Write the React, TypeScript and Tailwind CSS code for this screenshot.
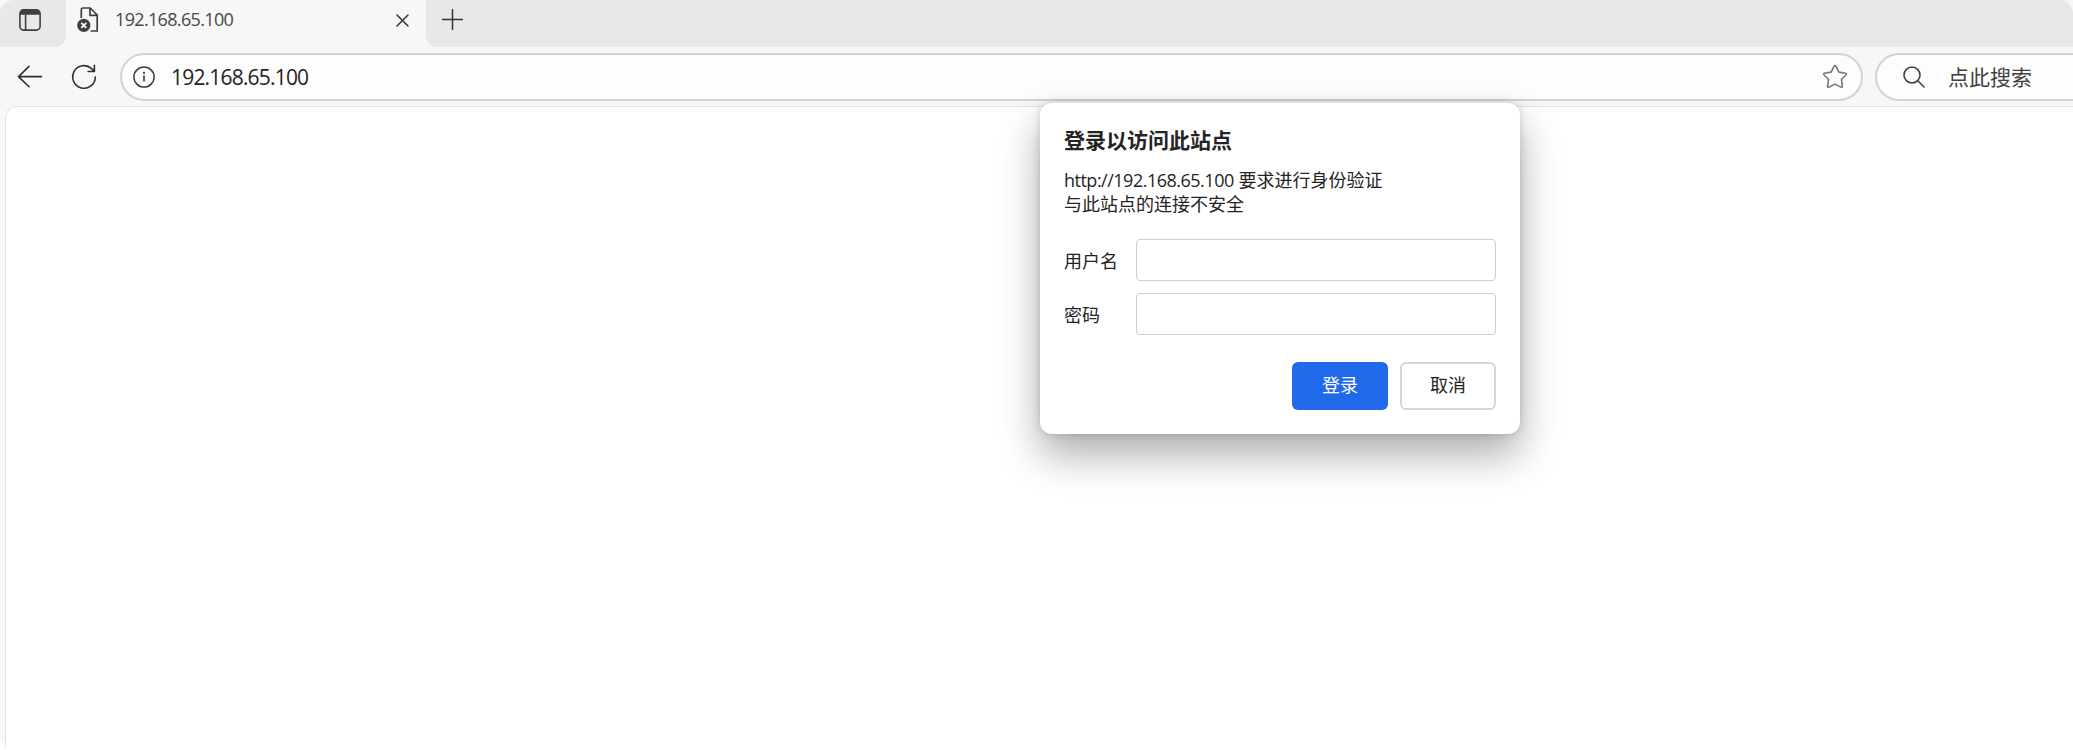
import React, { useState } from 'react';

const BackIcon = () => (
  <svg width="26" height="24" viewBox="0 0 26 24" fill="none" stroke="#2f2f2f" strokeWidth="1.6" strokeLinecap="round" strokeLinejoin="round">
    <path d="M24.5 11.6H1.5M12 1.4L1.5 11.6L12 21.8" />
  </svg>
);

const ReloadIcon = () => (
  <svg width="26" height="26" viewBox="0 0 26 26" fill="none" stroke="#2f2f2f" strokeWidth="1.6" strokeLinecap="round" strokeLinejoin="round">
    <path d="M24.3 13A11.3 11.3 0 1 1 20.6 4.6L23.4 7.4M23.4 1.2V7.5H17.1" />
  </svg>
);

const WorkspaceIcon = () => (
  <svg width="22" height="22" viewBox="0 0 22 22" fill="none" stroke="#3f3f3f" strokeWidth="1.6">
    <rect x="0.9" y="0.9" width="20.2" height="20.2" rx="3.6" />
    <path d="M1 5.8V4.4A3.4 3.4 0 0 1 4.4 1H17.6A3.4 3.4 0 0 1 21 4.4V5.8Z" fill="#3f3f3f" stroke="none" />
    <path d="M6.6 5.5V21" />
  </svg>
);

const PageErrorIcon = () => (
  <svg width="22" height="26" viewBox="0 0 22 26" fill="none">
    <path d="M4.3 11V2.8Q4.3 1 6.1 1H13.2L20.2 8V24H13.5M13 1V8.4H20.4" stroke="#3f3f3f" strokeWidth="1.7" />
    <circle cx="6.8" cy="18.3" r="6.6" fill="#3f3f3f" />
    <path d="M4.3 15.8L9.3 20.8M9.3 15.8L4.3 20.8" stroke="#fff" strokeWidth="1.7" />
  </svg>
);

const InfoIcon = () => (
  <svg width="22" height="22" viewBox="0 0 22 22" fill="none" stroke="#3f3f3f" strokeWidth="1.5">
    <circle cx="11" cy="11" r="10.1" />
    <path d="M11 9.6V15.6" strokeWidth="1.7" />
    <circle cx="11" cy="6.9" r="1.1" fill="#3f3f3f" stroke="none" />
  </svg>
);

const StarIcon = () => (
  <svg width="26" height="26" viewBox="0 0 26 26" fill="none" stroke="#767676" strokeWidth="1.6" strokeLinejoin="round">
    <path d="M12.1 2.1Q13 .8 13.9 2.1L16.9 8.1L23.6 9.2Q25.1 9.6 24.1 10.7L19.4 15.5L20.4 22.2Q20.4 23.7 19 23.1L13 20.1L7 23.1Q5.6 23.7 5.6 22.2L6.6 15.5L1.9 10.7Q.9 9.6 2.4 9.2L9.1 8.1Z" />
  </svg>
);

const SearchIcon = () => (
  <svg width="22" height="22" viewBox="0 0 22 22" fill="none" stroke="#3f3f3f" strokeWidth="1.6" strokeLinecap="round">
    <circle cx="9" cy="9" r="8" />
    <path d="M14.8 14.8L21 21" />
  </svg>
);

const TabBar = () => (
  <div className="flex h-[47px] shrink-0 bg-[#f7f7f7]">
    <div className="flex w-[66px] shrink-0 items-start rounded-tl-[14px] rounded-br-[11px] bg-[#e8e8e8] pt-[9px] pl-[19px]">
      <WorkspaceIcon />
    </div>
    <div className="flex h-10 w-[360px] shrink-0 items-center pr-[17px] pl-[11px]">
      <PageErrorIcon />
      <span className="ml-4 flex-1 pb-[2px] text-[18px] tracking-[-0.66px] text-[#484848]">192.168.65.100</span>
      <svg width="13" height="13" viewBox="0 0 13 13" stroke="#333" strokeWidth="1.5" strokeLinecap="round">
        <path d="M1 1L12 12M12 1L1 12" />
      </svg>
    </div>
    <div className="flex flex-1 rounded-tr-[14px] rounded-bl-[11px] bg-[#e8e8e8] pt-[9px] pl-4">
      <svg width="21" height="21" viewBox="0 0 21 21" stroke="#333" strokeWidth="1.5" strokeLinecap="round">
        <path d="M10.5 .5V20.5M.5 10.5H20.5" />
      </svg>
    </div>
  </div>
);

const Toolbar = () => (
  <div className="flex h-[59px] shrink-0 items-start pt-[6px]">
    <div className="flex h-12 w-[120px] shrink-0 items-center gap-7 pl-[17px]">
      <BackIcon />
      <ReloadIcon />
    </div>
    <div className="flex h-12 w-[1743px] shrink-0 items-center rounded-full border-2 border-[#d3d3d3] bg-[#fdfdfd] pr-[13px] pl-[11px]">
      <InfoIcon />
      <span className="ml-4 flex-1 pt-[2px] text-[21px] tracking-[-0.81px] text-[#242424]">192.168.65.100</span>
      <StarIcon />
    </div>
    <div className="ml-3 flex h-12 flex-1 items-center rounded-l-full border-2 border-r-0 border-[#d3d3d3] bg-[#fdfdfd] pl-[26px]">
      <SearchIcon />
      <span className="ml-[23px] pt-px text-[21px] text-[#404040]">点此搜索</span>
    </div>
  </div>
);

const LoginDialog = () => {
  const [username, setUsername] = useState('');
  const [password, setPassword] = useState('');

  return (
    <form
      onSubmit={(e) => e.preventDefault()}
      className="absolute top-[103px] left-[1040px] flex h-[331px] w-[480px] flex-col rounded-[12px] bg-white px-6 pt-[21px] text-[18px] text-[#242424] shadow-[0_0_8px_rgba(0,0,0,0.16),0_21px_42px_rgba(0,0,0,0.32)]"
    >
      <h1 className="text-[21px] leading-[32px] font-bold">登录以访问此站点</h1>
      <p className="mt-3 leading-6">
        <span className="tracking-[-0.5px]">http://192.168.65.100</span> 要求进行身份验证
      </p>
      <p className="leading-6">与此站点的连接不安全</p>

      <label className="mt-[23px] flex h-[42px] items-center">
        <span className="w-[72px] pt-[2px]">用户名</span>
        <input
          type="text"
          value={username}
          onChange={(e) => setUsername(e.target.value)}
          className="h-[42px] flex-1 rounded-[4px] border border-[#cecece] bg-white px-3 outline-none"
        />
      </label>
      <label className="mt-3 flex h-[42px] items-center">
        <span className="w-[72px] pt-[2px]">密码</span>
        <input
          type="password"
          value={password}
          onChange={(e) => setPassword(e.target.value)}
          className="h-[42px] flex-1 rounded-[4px] border border-[#cecece] bg-white px-3 outline-none"
        />
      </label>

      <div className="mt-[27px] flex justify-end gap-3">
        <button type="submit" className="h-12 w-24 rounded-[6px] bg-[#2169eb] pb-px text-white">登录</button>
        <button type="button" className="h-12 w-24 rounded-[6px] border-2 border-[#d6d6d6] bg-white pb-px">取消</button>
      </div>
    </form>
  );
};

export default function App() {
  return (
    <div className="relative h-[750px] w-[2073px] overflow-hidden bg-white font-['Open_Sans','Noto_Sans_CJK_SC',sans-serif]">
      <div className="flex h-[747px] flex-col rounded-t-[14px] rounded-bl-[12px] bg-[#f7f7f7]">
        <TabBar />
        <Toolbar />
        <div className="ml-[5px] flex-1 rounded-tl-[12px] border-t border-l border-[#e3e3e3] bg-white" />
      </div>
      <LoginDialog />
    </div>
  );
}
